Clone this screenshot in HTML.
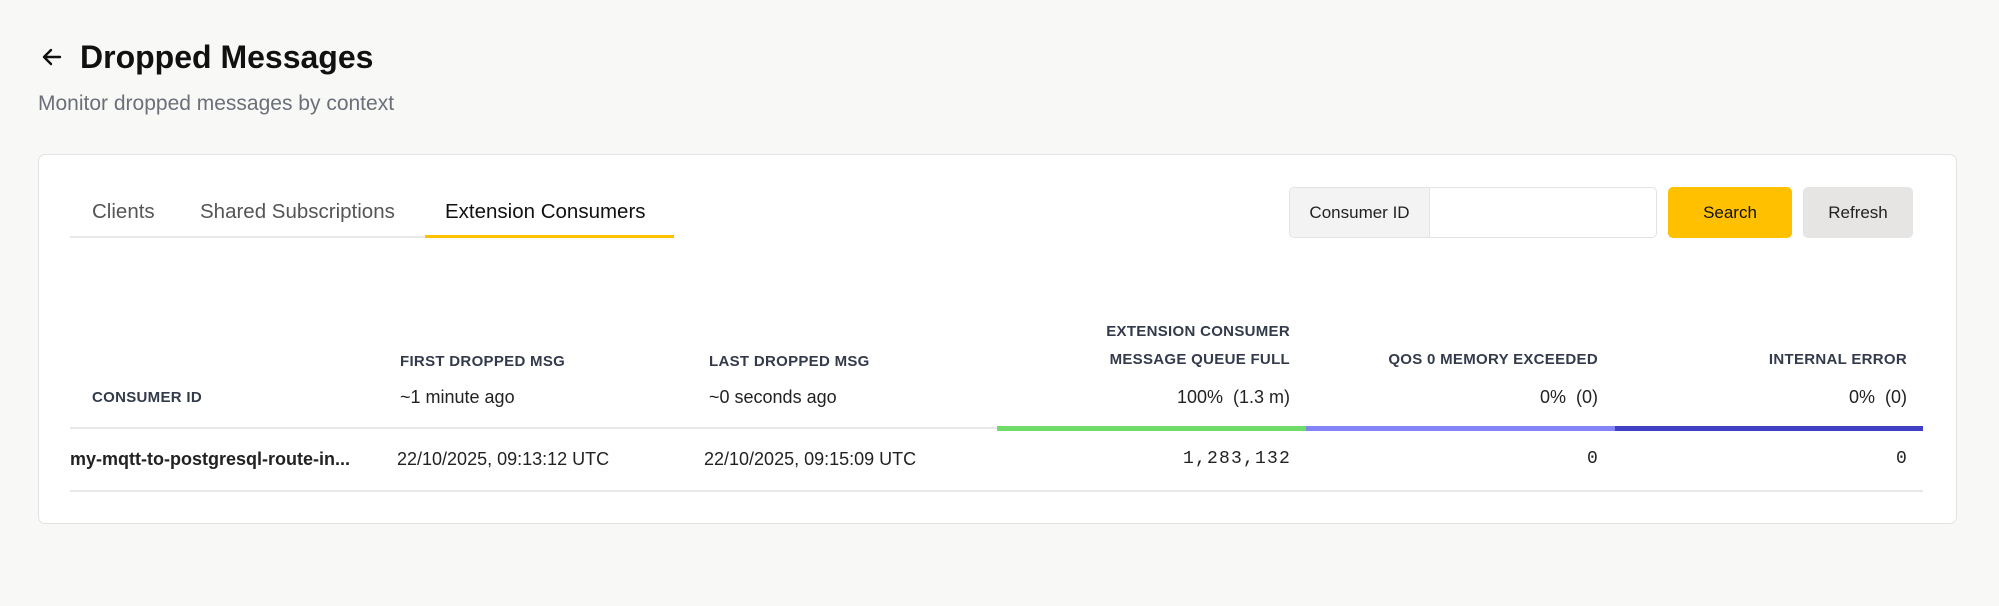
<!DOCTYPE html>
<html><head><style>
*{box-sizing:border-box;margin:0;padding:0}
body{width:1999px;height:606px;background:#f8f8f7;font-family:"Liberation Sans",sans-serif;color:#111;position:relative;overflow:hidden}
.a{position:absolute;white-space:nowrap}
.h{font-size:15px;font-weight:bold;color:#333a4a;letter-spacing:0.3px}
.s{font-size:18px;color:#222}
.r{text-align:right}
.m{font-family:"Liberation Mono",monospace;font-size:18px;letter-spacing:1.2px;color:#222}
</style></head><body>
<svg class="a" style="left:40px;top:45px" width="24" height="24" viewBox="0 0 24 24"><path d="M20 12H4M11 5l-7 7 7 7" fill="none" stroke="#111" stroke-width="2.4" stroke-linecap="round" stroke-linejoin="round"/></svg>
<div class="a" style="left:80px;top:39px;font-size:32px;font-weight:bold">Dropped Messages</div>
<div class="a" style="left:38px;top:92px;font-size:21px;color:#6b6f78">Monitor dropped messages by context</div>
<div class="a" style="left:38px;top:154px;width:1919px;height:370px;background:#fff;border:1px solid #e3e3e3;border-radius:7px"></div>
<div class="a" style="left:70px;top:236px;width:603px;height:2px;background:#e8e8e8"></div>
<div class="a" style="left:425px;top:235px;width:249px;height:3px;background:#ffc000"></div>
<div class="a" style="left:92px;top:200px;font-size:20.5px;color:#555">Clients</div>
<div class="a" style="left:200px;top:200px;font-size:20.5px;color:#555">Shared Subscriptions</div>
<div class="a" style="left:445px;top:200px;font-size:20.5px;color:#111">Extension Consumers</div>
<div class="a" style="left:1289px;top:187px;width:368px;height:51px;border:1px solid #e3e3e3;border-radius:5px;background:#fff;overflow:hidden">
<div style="width:140px;height:100%;background:#f3f3f3;border-right:1px solid #e3e3e3;font-size:17px;line-height:49px;text-align:center;color:#222">Consumer ID</div></div>
<div class="a" style="left:1668px;top:187px;width:124px;height:51px;background:#ffc000;border-radius:5px;font-size:17px;line-height:51px;text-align:center">Search</div>
<div class="a" style="left:1803px;top:187px;width:110px;height:51px;background:#e6e5e3;border-radius:5px;font-size:17px;line-height:51px;text-align:center;color:#222">Refresh</div>
<div class="a h" style="left:92px;top:389px">CONSUMER ID</div>
<div class="a h" style="left:400px;top:353px">FIRST DROPPED MSG</div>
<div class="a s" style="left:400px;top:387px">~1 minute ago</div>
<div class="a h" style="left:709px;top:353px">LAST DROPPED MSG</div>
<div class="a s" style="left:709px;top:387px">~0 seconds ago</div>
<div class="a h r" style="right:709px;top:323px">EXTENSION CONSUMER</div>
<div class="a h r" style="right:709px;top:351px">MESSAGE QUEUE FULL</div>
<div class="a s r" style="right:709px;top:387px">100%&nbsp; (1.3 m)</div>
<div class="a h r" style="right:401px;top:351px">QOS 0 MEMORY EXCEEDED</div>
<div class="a s r" style="right:401px;top:387px">0%&nbsp; (0)</div>
<div class="a h r" style="right:92px;top:351px">INTERNAL ERROR</div>
<div class="a s r" style="right:92px;top:387px">0%&nbsp; (0)</div>
<div class="a" style="left:70px;top:427px;width:927px;height:2px;background:#e8e8e8"></div>
<div class="a" style="left:997px;top:426px;width:309px;height:5px;background:#6fdc6a"></div>
<div class="a" style="left:1306px;top:426px;width:309px;height:5px;background:#8484f6"></div>
<div class="a" style="left:1615px;top:426px;width:308px;height:5px;background:#4040c4"></div>
<div class="a s" style="left:70px;top:449px;font-weight:bold;font-size:18px">my-mqtt-to-postgresql-route-in...</div>
<div class="a s" style="left:397px;top:449px">22/10/2025, 09:13:12 UTC</div>
<div class="a s" style="left:704px;top:449px">22/10/2025, 09:15:09 UTC</div>
<div class="a m r" style="right:708px;top:449px">1,283,132</div>
<div class="a m r" style="right:400px;top:449px">0</div>
<div class="a m r" style="right:91px;top:449px">0</div>
<div class="a" style="left:70px;top:490px;width:1853px;height:2px;background:#e8e8e8"></div>
</body></html>
